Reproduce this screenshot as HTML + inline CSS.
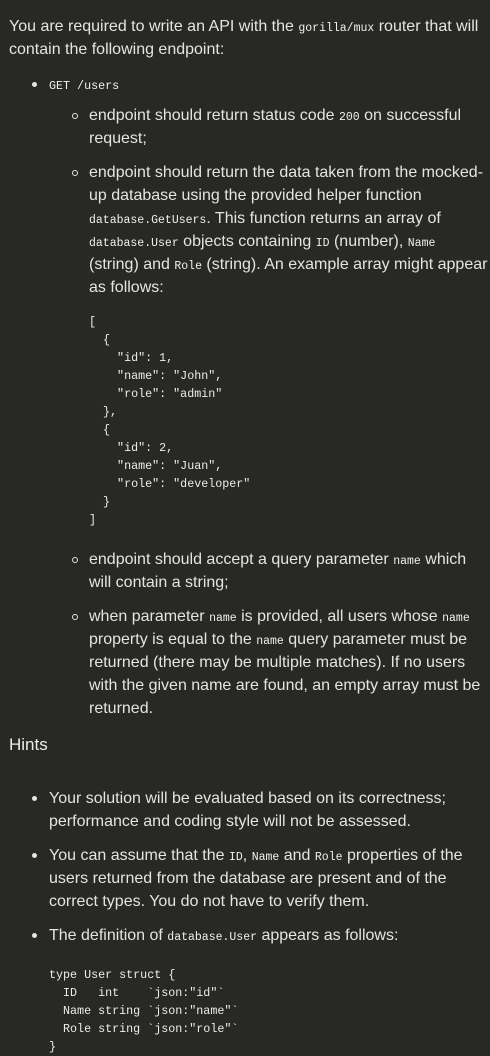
<!DOCTYPE html>
<html><head><meta charset="utf-8"><style>
html,body{margin:0;padding:0;background:#282825;}
body{width:490px;height:1048px;position:relative;overflow:hidden;color:#e4e4e2;font-family:"Liberation Sans",sans-serif;font-size:16px;}
.l{position:absolute;white-space:nowrap;line-height:23px;height:23px;}
code{font-family:"Liberation Mono",monospace;font-size:11.5px;color:#f0f0ee;}
.c{position:absolute;white-space:pre;font-family:"Liberation Mono",monospace;font-size:11.7px;line-height:18px;color:#ececea;}
.dot{position:absolute;width:5px;height:5px;border-radius:50%;background:#e4e4e2;}
.ring{position:absolute;width:4px;height:4px;border-radius:50%;border:1px solid #e4e4e2;}
</style></head><body>
<div class="l" style="left:9px;top:15px">You are required to write an API with the <code>gorilla/mux</code> router that will</div>
<div class="l" style="left:9px;top:38px">contain the following endpoint:</div>

<div class="dot" style="left:32px;top:82px"></div>
<div class="l" style="left:49px;top:73px"><code style="font-size:11.7px">GET /users</code></div>

<div class="ring" style="left:72px;top:113px"></div>
<div class="l" style="left:89px;top:104px">endpoint should return status code <code>200</code> on successful</div>
<div class="l" style="left:89px;top:127px">request;</div>

<div class="ring" style="left:72px;top:170px"></div>
<div class="l" style="left:89px;top:161px">endpoint should return the data taken from the mocked-</div>
<div class="l" style="left:89px;top:184px">up database using the provided helper function</div>
<div class="l" style="left:89px;top:207px"><code>database.GetUsers</code>. This function returns an array of</div>
<div class="l" style="left:89px;top:230px"><code>database.User</code> objects containing <code>ID</code> (number), <code>Name</code></div>
<div class="l" style="left:89px;top:253px">(string) and <code>Role</code> (string). An example array might appear</div>
<div class="l" style="left:89px;top:276px">as follows:</div>

<div class="c" style="left:89px;top:313px">[
  {
    "id": 1,
    "name": "John",
    "role": "admin"
  },
  {
    "id": 2,
    "name": "Juan",
    "role": "developer"
  }
]</div>

<div class="ring" style="left:72px;top:557px"></div>
<div class="l" style="left:89px;top:548px">endpoint should accept a query parameter <code>name</code> which</div>
<div class="l" style="left:89px;top:571px">will contain a string;</div>

<div class="ring" style="left:72px;top:614px"></div>
<div class="l" style="left:89px;top:605px">when parameter <code>name</code> is provided, all users whose <code>name</code></div>
<div class="l" style="left:89px;top:628px">property is equal to the <code>name</code> query parameter must be</div>
<div class="l" style="left:89px;top:651px">returned (there may be multiple matches). If no users</div>
<div class="l" style="left:89px;top:674px">with the given name are found, an empty array must be</div>
<div class="l" style="left:89px;top:697px">returned.</div>

<div class="l" style="left:9px;top:733px;font-size:17px;color:#ececea">Hints</div>

<div class="dot" style="left:32px;top:796px"></div>
<div class="l" style="left:49px;top:787px">Your solution will be evaluated based on its correctness;</div>
<div class="l" style="left:49px;top:810px">performance and coding style will not be assessed.</div>

<div class="dot" style="left:32px;top:853px"></div>
<div class="l" style="left:49px;top:844px">You can assume that the <code>ID</code>, <code>Name</code> and <code>Role</code> properties of the</div>
<div class="l" style="left:49px;top:867px">users returned from the database are present and of the</div>
<div class="l" style="left:49px;top:890px">correct types. You do not have to verify them.</div>

<div class="dot" style="left:32px;top:933px"></div>
<div class="l" style="left:49px;top:924px">The definition of <code>database.User</code> appears as follows:</div>

<div class="c" style="left:49px;top:966px">type User struct {
  ID   int    `json:"id"`
  Name string `json:"name"`
  Role string `json:"role"`
}</div>
</body></html>
